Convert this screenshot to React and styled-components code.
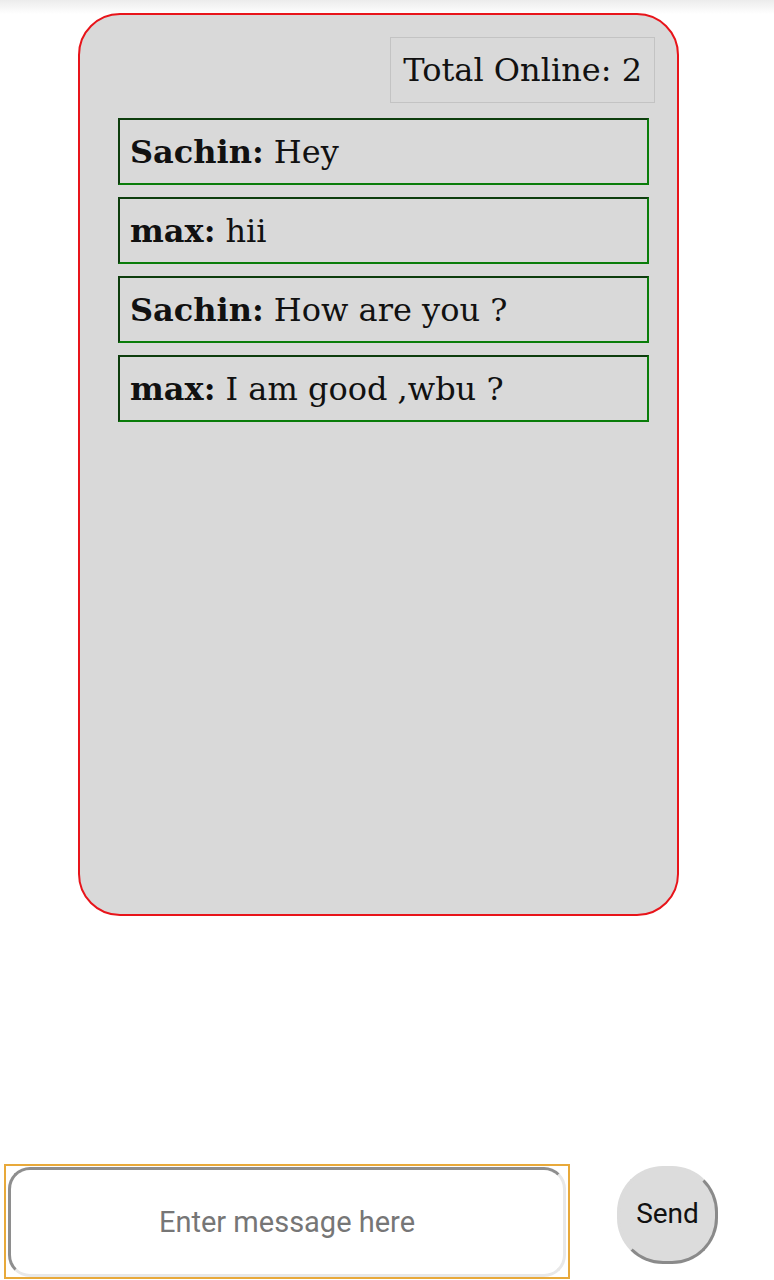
import React from "react";
import styled, { createGlobalStyle } from "styled-components";

const Global = createGlobalStyle`
  html, body { margin: 0; padding: 0; }
  body {
    background: linear-gradient(to bottom, #ececec 0px, #ffffff 14px) no-repeat, #ffffff;
    font-family: "DejaVu Serif", serif;
  }
`;

const Page = styled.div`
  min-height: 1280px;
  display: flex;
  flex-direction: column;
`;

const Card = styled.section`
  box-sizing: border-box;
  width: 601px;
  height: 903px;
  margin: 13px 0 0 78px;
  padding: 22px 22px 0 38px;
  background: #d9d9d9;
  border: 2px solid #e8141a;
  border-radius: 42px;
  display: flex;
  flex-direction: column;
`;

const Header = styled.div`
  display: flex;
  justify-content: flex-end;
`;

const OnlineBadge = styled.div`
  box-sizing: border-box;
  height: 66px;
  padding: 0 12px;
  display: flex;
  align-items: center;
  border: 1px solid #c3c3c3;
  font-size: 32px;
  color: #111;
`;

const Messages = styled.div`
  margin-top: 15px;
  width: 531px;
  display: flex;
  flex-direction: column;
  gap: 12px;
`;

const Message = styled.div`
  box-sizing: border-box;
  height: 67px;
  padding: 0 10px;
  display: flex;
  align-items: center;
  border: 2px solid;
  border-color: #0d3d0d #0a7d0a #0a7d0a #0d3d0d;
  font-size: 32px;
  color: #111;
  white-space: nowrap;
`;

const Name = styled.b`
  font-weight: 700;
  margin-right: 10px;
`;

const Footer = styled.div`
  margin-top: auto;
  padding: 0 0 1px 4px;
  display: flex;
  align-items: flex-start;
  gap: 47px;
`;

const InputFrame = styled.div`
  box-sizing: border-box;
  width: 566px;
  height: 115px;
  border: 2px solid #e8a93a;
  padding: 1px 2px;
  display: flex;
`;

const MessageInput = styled.input`
  box-sizing: border-box;
  width: 100%;
  height: 110px;
  border: 3px solid;
  border-color: #8e8e8e #e8e8e8 #e8e8e8 #8e8e8e;
  border-radius: 22px;
  background: #fff;
  text-align: center;
  font-family: Roboto, "Noto Sans", sans-serif;
  font-size: 29px;
  outline: none;
  &::placeholder { color: #767676; }
`;

const SendButton = styled.button`
  box-sizing: border-box;
  width: 101px;
  height: 98px;
  margin-top: 2px;
  border: 3px solid;
  border-color: #dcdcdc #8a8a8a #8a8a8a #dcdcdc;
  border-radius: 46px;
  background: #dcdcdc;
  font-family: Roboto, "Noto Sans", sans-serif;
  font-size: 28px;
  color: #111;
  padding: 0 0 4px 0;
`;

const messages = [
  { name: "Sachin", text: "Hey" },
  { name: "max", text: "hii" },
  { name: "Sachin", text: "How are you ?" },
  { name: "max", text: "I am good ,wbu ?" },
];

export default function App() {
  return (
    <Page>
      <Global />
      <Card>
        <Header>
          <OnlineBadge>Total Online: 2</OnlineBadge>
        </Header>
        <Messages>
          {messages.map((m, i) => (
            <Message key={i}>
              <Name>{m.name}:</Name>
              {m.text}
            </Message>
          ))}
        </Messages>
      </Card>
      <Footer>
        <InputFrame>
          <MessageInput placeholder="Enter message here" />
        </InputFrame>
        <SendButton>Send</SendButton>
      </Footer>
    </Page>
  );
}
